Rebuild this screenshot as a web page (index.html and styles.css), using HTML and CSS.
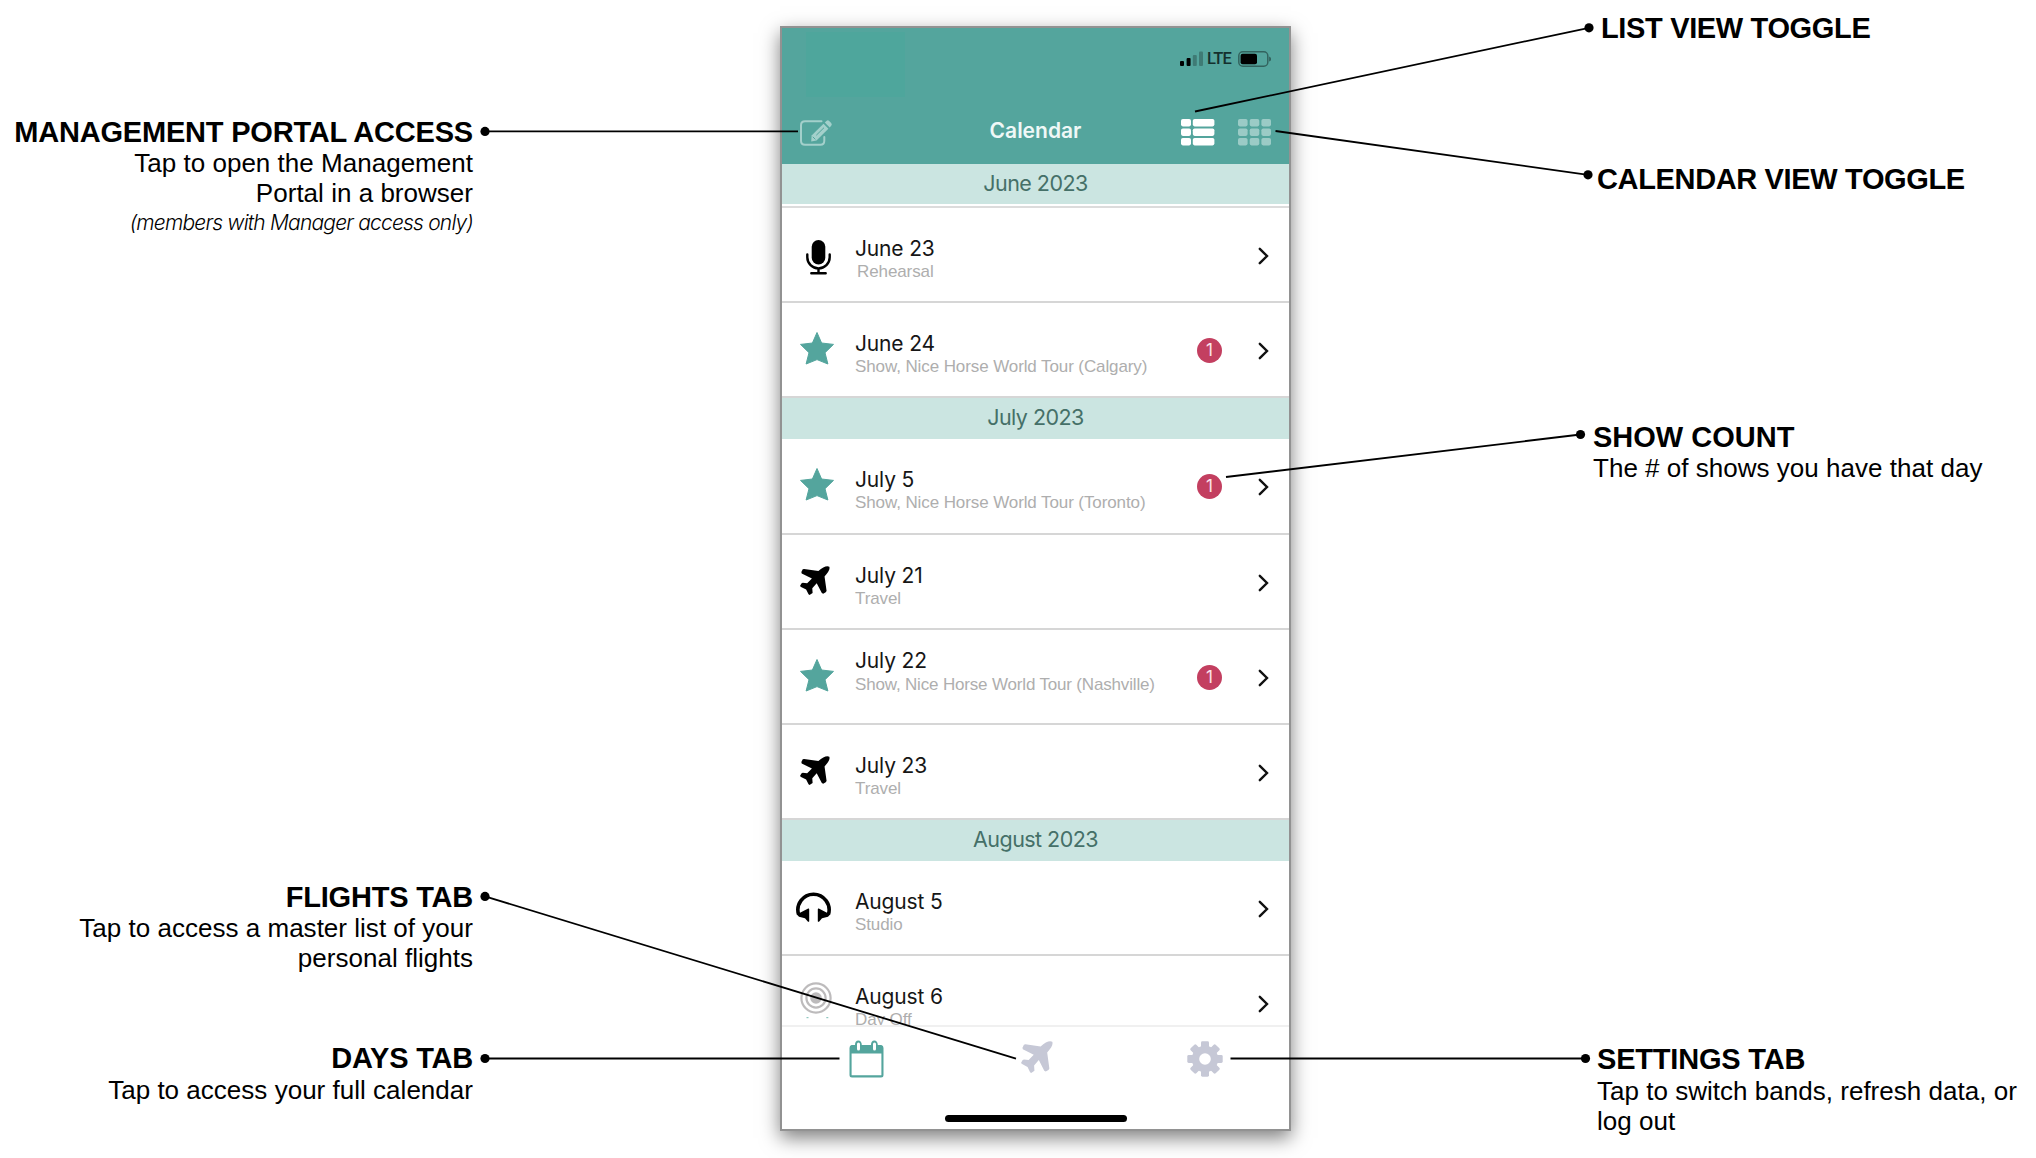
FILE: index.html
```html
<!DOCTYPE html>
<html lang="en">
<head>
<meta charset="UTF-8" />
<meta name="viewport" content="width=device-width, initial-scale=1" />
<title>Calendar – App Guide</title>
<link rel="stylesheet" href="styles.css">
</head>
<body>

<!-- shared icons -->
<svg class="defs" width="0" height="0">
  <symbol id="star" viewBox="0 0 34 33"><path d="M17 .5 L21.6 11 L33.5 12.4 L25 20.7 L27.9 32 L17 27.6 L6.1 32 L9 20.7 L.5 12.4 L12.4 11Z" stroke-width="1" stroke="currentColor" stroke-linejoin="round" fill="currentColor"/></symbol>
  <symbol id="plane" viewBox="0 0 88 86" preserveAspectRatio="none"><path fill="currentColor" d="M86 2C89 10 83 19 72 31L78 74Q78 78 68 82L64 80L49 51L36 66L37 80L28 86L25 84L18 70L3 62L0 59L4 52L8 50L21 51L35 37L5 22L4 18L8 10L12 9L54 15C67 2 80 -2 86 2Z"/></symbol>
  <symbol id="chevron" viewBox="0 0 11 18"><path d="M1.8 1.8L9 9L1.8 16.2" fill="none" stroke="#111" stroke-width="2.4" stroke-linecap="round" stroke-linejoin="miter"/></symbol>
</svg>

<div class="guide">

  <div class="notes notes-left">
    <div class="note note-portal">
      <h2>MANAGEMENT PORTAL ACCESS</h2>
      <p>Tap to open the Management<br>Portal in a browser</p>
      <p class="small">(members with Manager access only)</p>
    </div>
    <div class="note note-flights">
      <h2>FLIGHTS TAB</h2>
      <p>Tap to access a master list of your<br>personal flights</p>
    </div>
    <div class="note note-days">
      <h2>DAYS TAB</h2>
      <p>Tap to access your full calendar</p>
    </div>
  </div>

  <div class="phone">
    <div class="header">
      <div class="header-patch"></div>
      <div class="status">
        <svg width="24" height="16" viewBox="0 0 24 16">
          <rect x="0" y="10" width="4" height="5" rx="1"/>
          <rect x="6.6" y="7" width="4" height="8" rx="1"/>
          <rect x="12.8" y="4" width="4" height="11" rx="1" opacity=".25"/>
          <rect x="19" y="0.5" width="4" height="14.5" rx="1" opacity=".25"/>
        </svg>
        <span class="lte">LTE</span>
        <svg width="33" height="16" viewBox="0 0 33 16">
          <rect x=".8" y=".8" width="29" height="14.4" rx="4" fill="none" stroke="#000" stroke-width="1.5" opacity=".4"/>
          <rect x="2.6" y="2.8" width="16.4" height="10.4" rx="2"/>
          <path d="M31.2 5.4Q33 6 33 8T31.2 10.6Z" opacity=".45"/>
        </svg>
      </div>
      <div class="navbar">
        <svg class="edit" width="34" height="28" viewBox="0 0 34 28">
          <path d="M22.5 2.2H6Q2 2.2 2 6.2V21.8Q2 25.8 6 25.8H21.5Q25.3 25.8 25.3 21.8V18" fill="none" stroke="currentColor" stroke-width="2" stroke-linecap="round"/>
          <path d="M12.6 16.6L24.5 4.8L29.4 9.7L17.5 21.4L12.2 22.4Z" fill="currentColor"/>
          <path d="M25.8 3.5L27.4 1.9Q28.8 .7 30.2 1.9L32.2 3.9Q33.4 5.3 32.2 6.8L30.7 8.4Z" fill="currentColor"/>
          <path d="M17.3 16.2L25 8.7M13.8 17.8L16.4 20.4" stroke="#54a59d" stroke-width="1"/>
        </svg>
        <h1>Calendar</h1>
        <div class="toggles">
          <svg width="34" height="27" viewBox="0 0 34 27" fill="#fff">
            <rect x="0" y="0" width="10" height="7.4" rx="1.8"/><rect x="11.8" y="0" width="21.6" height="7.4" rx="1.8"/>
            <rect x="0" y="9.5" width="10" height="7.4" rx="1.8"/><rect x="11.8" y="9.5" width="21.6" height="7.4" rx="1.8"/>
            <rect x="0" y="19" width="10" height="7.4" rx="1.8"/><rect x="11.8" y="19" width="21.6" height="7.4" rx="1.8"/>
          </svg>
          <svg width="34" height="27" viewBox="0 0 34 27" fill="#9bcbc6">
            <rect x="0" y="0" width="9.6" height="7.4" rx="1.8"/><rect x="11.7" y="0" width="9.6" height="7.4" rx="1.8"/><rect x="23.4" y="0" width="9.6" height="7.4" rx="1.8"/>
            <rect x="0" y="9.5" width="9.6" height="7.4" rx="1.8"/><rect x="11.7" y="9.5" width="9.6" height="7.4" rx="1.8"/><rect x="23.4" y="9.5" width="9.6" height="7.4" rx="1.8"/>
            <rect x="0" y="19" width="9.6" height="7.4" rx="1.8"/><rect x="11.7" y="19" width="9.6" height="7.4" rx="1.8"/><rect x="23.4" y="19" width="9.6" height="7.4" rx="1.8"/>
          </svg>
        </div>
      </div>
    </div>

    <div class="list">
      <div class="month month-first">June 2023</div>
      <div class="row">
        <div class="icon">
          <svg class="mic" width="25" height="35" viewBox="0 0 25 35">
            <rect x="5.7" y="0" width="13.6" height="24.5" rx="6.8"/>
            <path d="M1.3 14.5V17.2A11.2 11.2 0 0 0 23.7 17.2V14.5M12.5 28.5V33M5.3 33.2H19.7" fill="none" stroke="#000" stroke-width="2.4" stroke-linecap="round"/>
          </svg>
        </div>
        <div class="info"><h3>June 23</h3><p class="indent">Rehearsal</p></div>
        <svg class="chevron"><use href="#chevron"/></svg>
      </div>
      <div class="row">
        <div class="icon"><svg class="star"><use href="#star"/></svg></div>
        <div class="info"><h3>June 24</h3><p>Show, Nice Horse World Tour (Calgary)</p></div>
        <span class="count">1</span>
        <svg class="chevron"><use href="#chevron"/></svg>
      </div>

      <div class="month">July 2023</div>
      <div class="row">
        <div class="icon"><svg class="star"><use href="#star"/></svg></div>
        <div class="info"><h3>July 5</h3><p>Show, Nice Horse World Tour (Toronto)</p></div>
        <span class="count">1</span>
        <svg class="chevron"><use href="#chevron"/></svg>
      </div>
      <div class="row">
        <div class="icon"><svg class="plane"><use href="#plane"/></svg></div>
        <div class="info"><h3>July 21</h3><p>Travel</p></div>
        <svg class="chevron"><use href="#chevron"/></svg>
      </div>
      <div class="row">
        <div class="icon"><svg class="star"><use href="#star"/></svg></div>
        <div class="info info-high"><h3>July 22</h3><p>Show, Nice Horse World Tour (Nashville)</p></div>
        <span class="count">1</span>
        <svg class="chevron"><use href="#chevron"/></svg>
      </div>
      <div class="row">
        <div class="icon"><svg class="plane"><use href="#plane"/></svg></div>
        <div class="info"><h3>July 23</h3><p>Travel</p></div>
        <svg class="chevron"><use href="#chevron"/></svg>
      </div>

      <div class="month">August 2023</div>
      <div class="row">
        <div class="icon">
          <svg class="phones" width="35" height="30" viewBox="0 0 35 30">
            <path d="M2.6 22.5A15.6 15.6 0 1 1 32.4 22.5" fill="none" stroke="#000" stroke-width="3.6"/>
            <path d="M.6 20.5L4 20.8L12.2 16.6Q13.2 16.2 13.2 17.4V29Q13.2 30.2 12 29.7L9 26.2L3 24.8Q1 24 .6 20.5ZM34.4 20.5L31 20.8L22.8 16.6Q21.8 16.2 21.8 17.4V29Q21.8 30.2 23 29.7L26 26.2L32 24.8Q34 24 34.4 20.5Z"/>
          </svg>
        </div>
        <div class="info"><h3>August 5</h3><p>Studio</p></div>
        <svg class="chevron"><use href="#chevron"/></svg>
      </div>
      <div class="row row-last">
        <div class="icon">
          <svg class="target" width="32" height="38" viewBox="0 0 32 38">
            <g fill="none" stroke="#bdbbbc" stroke-width="2.2">
              <circle cx="16" cy="16" r="14.6"/>
              <circle cx="16" cy="16" r="9.6"/>
            </g>
            <circle cx="16" cy="16" r="5.8" fill="#bdbbbc"/>
            <rect x="6.5" y="35" width="2" height="1.2" fill="#8fc7c0"/>
            <rect x="26.3" y="35" width="2" height="1.2" fill="#8fc7c0"/>
          </svg>
        </div>
        <div class="info"><h3>August 6</h3><p>Day Off</p></div>
        <svg class="chevron"><use href="#chevron"/></svg>
      </div>
    </div>

    <div class="tabs">
      <div class="tab tab-days">
        <svg width="35" height="38" viewBox="0 0 35 38">
          <path fill="#54a59d" fill-rule="evenodd" d="M2.5 5H6Q6 .5 9.3 .5T12.8 5H22Q22 .5 25.3 .5T28.8 5H32.3Q34.5 5.5 34.5 8V35Q34.5 37.5 32 37.5H3Q.5 37.5 .5 35V8Q.5 5.5 2.5 5ZM2.6 13.5V35.2H32.4V13.5Z"/>
          <rect x="8" y="2.5" width="3" height="8" rx="1.5" fill="#fff"/>
          <rect x="24" y="2.5" width="3" height="8" rx="1.5" fill="#fff"/>
        </svg>
      </div>
      <div class="tab tab-flights"><svg class="tab-plane"><use href="#plane"/></svg></div>
      <div class="tab tab-settings">
        <svg width="36" height="36" viewBox="-18 -18 36 36" fill="#c6c8d6">
          <g id="teeth">
            <rect x="-4" y="-17.7" width="8" height="35.4" rx="1.4"/>
            <rect x="-17.7" y="-4" width="35.4" height="8" rx="1.4"/>
          </g>
          <use href="#teeth" transform="rotate(45)"/>
          <circle r="13.2"/>
          <circle r="5.8" fill="#fff"/>
        </svg>
      </div>
    </div>
    <div class="home-bar"></div>
  </div>

  <div class="notes notes-right">
    <div class="note note-list"><h2>LIST VIEW TOGGLE</h2></div>
    <div class="note note-calendar"><h2>CALENDAR VIEW TOGGLE</h2></div>
    <div class="note note-count">
      <h2>SHOW COUNT</h2>
      <p>The # of shows you have that day</p>
    </div>
    <div class="note note-settings">
      <h2>SETTINGS TAB</h2>
      <p>Tap to switch bands, refresh data, or<br>log out</p>
    </div>
  </div>

  <!-- pointer lines -->
  <svg class="pointers" viewBox="0 0 2036 1158">
    <g stroke="#000" stroke-width="1.8">
      <line x1="485" y1="131.4" x2="798" y2="131.4"/>
      <line x1="1589" y1="27.8" x2="1195" y2="111.5"/>
      <line x1="1588" y1="174.8" x2="1275.5" y2="131"/>
      <line x1="1580.5" y1="434.5" x2="1226" y2="477"/>
      <line x1="485" y1="896.4" x2="1016" y2="1058.6"/>
      <line x1="485" y1="1058.5" x2="839.5" y2="1058.5"/>
      <line x1="1585.5" y1="1058.5" x2="1230.5" y2="1058.5"/>
    </g>
    <circle cx="485" cy="131.4" r="4.6"/>
    <circle cx="1589" cy="27.8" r="4.6"/>
    <circle cx="1588" cy="174.8" r="4.6"/>
    <circle cx="1580.5" cy="434.5" r="4.6"/>
    <circle cx="485" cy="896.4" r="4.6"/>
    <circle cx="485" cy="1058.5" r="4.6"/>
    <circle cx="1585.5" cy="1058.5" r="4.6"/>
  </svg>
</div>

</body>
</html>
```
FILE: styles.css
```css
* { box-sizing: border-box; }
body { margin: 0; background: #fff; color: #000; font-family: "Liberation Sans", Arial, sans-serif; }
h1, h2, h3, p { margin: 0; }
.defs { position: absolute; }
svg { display: block; flex-shrink: 0; }

.guide {
  position: relative;
  display: flex;
  width: 2036px;
  height: 1158px;
  overflow: hidden;
}

/* notes */
.notes {
  display: flex;
  flex-direction: column;
  white-space: nowrap;
}
.notes-left {
  width: 473px;
  text-align: right;
  align-items: flex-end;
}
.notes-right { margin-left: 302px; }
.note h2 {
  font-size: 29px;
  line-height: 30px;
  font-weight: bold;
  letter-spacing: -0.2px;
}
.note p {
  font-size: 26px;
  line-height: 30px;
  padding-top: 1px;
  letter-spacing: 0.02px;
}
.note .small {
  font-family: Inter, "Liberation Sans", sans-serif;
  font-size: 21px;
  line-height: 28px;
  font-weight: 300;
  font-style: italic;
  letter-spacing: -0.8px;
}
.note-portal { margin-top: 117px; height: 120px; }
.note-portal p { padding-top: 2px; line-height: 29.5px; }
.note-portal .small { padding-top: 1px; }
.note-flights { margin-top: 645px; height: 92px; }
.note-days { margin-top: 69px; }
.note-days p { padding-top: 2px; }
.note-list { margin: 13px 0 0 8px; height: 30px; }
.note-calendar { margin: 121px 0 0 4px; height: 30px; }
.note-list h2, .note-calendar h2 { letter-spacing: -0.35px; }
.note-count { margin-top: 228px; height: 62px; }
.note-count h2 { letter-spacing: 0; }
.note-settings { margin: 560px 0 0 4px; }
.note-settings p { padding-top: 2px; }

/* phone */
.phone {
  width: 511px;
  height: 1105px;
  margin: 26px 0 0 307px;
  border: 2px solid #929292;
  background: #fff;
  box-shadow: 0 7px 18px rgba(0, 0, 0, 0.5);
  display: flex;
  flex-direction: column;
  flex-shrink: 0;
}
.header {
  position: relative;
  height: 136px;
  background: #54a59d;
  display: flex;
  flex-direction: column;
  flex-shrink: 0;
}
.header-patch {
  position: absolute;
  left: 24px;
  top: 4px;
  width: 99px;
  height: 65px;
  background: #4ea69c;
}
.status {
  display: flex;
  justify-content: flex-end;
  align-items: center;
  padding: 23px 18px 0 0;
}
.lte {
  width: 27px;
  margin: 0 4px 0 3px;
  font-family: Roboto, sans-serif;
  font-size: 16.5px;
  line-height: 16px;
  font-weight: 500;
  letter-spacing: -0.7px;
  color: #14302d;
}
.navbar {
  display: grid;
  grid-template-columns: 110px 1fr 110px;
  align-items: center;
  margin-top: 48px;
  padding: 0 17px 0 17px;
  height: 35px;
}
.edit { color: #a3d0cb; }
.navbar h1 {
  padding-bottom: 4px;
  font-family: Inter, sans-serif;
  font-size: 21px;
  line-height: 30px;
  font-weight: 600;
  text-align: center;
  color: #eff8f7;
}
.toggles {
  display: flex;
  justify-content: flex-end;
  gap: 23px;
}

/* list of days */
.list {
  height: 861px;
  overflow: hidden;
  flex-shrink: 0;
  font-family: Inter, sans-serif;
}
.month {
  height: 41px;
  background: #cbe5e1;
  color: #457068;
  font-size: 21.5px;
  line-height: 39px;
  letter-spacing: -0.55px;
  text-align: center;
}
.month-first {
  height: 44px;
  border-bottom: 2px solid #dcdcdc;
  box-shadow: inset 0 -2px #fff;
}
.row {
  display: flex;
  height: 95.2px;
  border-bottom: 2px solid #d6d6d6;
}
.icon {
  width: 73px;
  padding: 29px 0 0 18px;
}
.mic { margin: 3px 0 0 6px; }
.star { width: 34px; height: 33px; color: #54a59d; }
.plane { width: 30px; height: 29px; margin-top: 2px; }
.phones { margin: 2px 0 0 -4px; }
.target { margin-top: -3px; }
.info {
  flex: 1;
  padding-top: 27px;
  white-space: nowrap;
}
.info-high { padding-top: 17px; }
.info h3 {
  font-size: 21px;
  line-height: 28px;
  font-weight: 400;
  letter-spacing: -0.15px;
  color: #161616;
}
.info p {
  font-family: "Liberation Sans", Arial, sans-serif;
  font-size: 17px;
  line-height: 18px;
  letter-spacing: -0.1px;
  color: #aeaeae;
}
.info-high p { padding-top: 1px; letter-spacing: -0.17px; }
.info .indent { padding-left: 2px; }
.count {
  width: 25px;
  height: 25px;
  margin: 35px 36px 0 0;
  border-radius: 50%;
  background: #c33f60;
  color: #fbe4ea;
  font-size: 17px;
  line-height: 25px;
  text-align: center;
}
.chevron { width: 11px; height: 18px; margin: 39px 20px 0 0; }

/* tab bar */
.tabs {
  display: flex;
  height: 90px;
  border-top: 2px solid #f0f0f0;
  flex-shrink: 0;
}
.tab {
  flex: 1;
  display: flex;
  justify-content: center;
  padding-top: 14px;
}
.tab-days { padding: 13px 3px 0 0; }
.tab-plane { width: 32px; height: 32px; color: #c6c8d6; }
.home-bar {
  width: 182px;
  height: 7px;
  margin: 0 auto;
  border-radius: 4px;
  background: #000;
}

.pointers {
  position: absolute;
  left: 0;
  top: 0;
  width: 2036px;
  height: 1158px;
}
```
